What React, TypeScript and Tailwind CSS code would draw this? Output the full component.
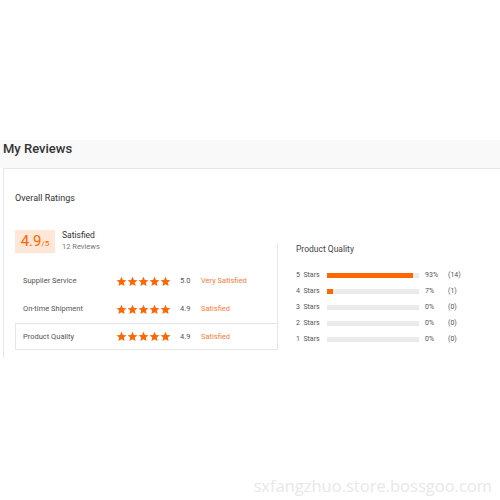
import React from 'react';

interface ScoreRow {
  label: string;
  score: string;
  status: string;
}

interface StarRow {
  label: string;
  pct: number;
  count: number;
}

const scoreRows: ScoreRow[] = [
  { label: 'Supplier Service', score: '5.0', status: 'Very Satisfied' },
  { label: 'On-time Shipment', score: '4.9', status: 'Satisfied' },
  { label: 'Product Quality', score: '4.9', status: 'Satisfied' },
];

const starRows: StarRow[] = [
  { label: '5  Stars', pct: 93, count: 14 },
  { label: '4  Stars', pct: 7, count: 1 },
  { label: '3  Stars', pct: 0, count: 0 },
  { label: '2  Stars', pct: 0, count: 0 },
  { label: '1  Stars', pct: 0, count: 0 },
];

const Star: React.FC = () => (
  <svg width="11" height="11" viewBox="0 0 24 24" className="block">
    <path
      d="M12 1.5l3.1 7 7.6.7-5.8 5.1 1.8 7.5L12 17.8l-6.7 4 1.8-7.5-5.8-5.1 7.6-.7z"
      fill="#ff6600"
    />
  </svg>
);

const App: React.FC = () => {
  return (
    <div
      className="relative h-[500px] w-[500px] overflow-hidden bg-white"
      style={{ fontFamily: 'Roboto, "Liberation Sans", sans-serif' }}
    >
      <div className="h-[140px]" />

      {/* Title band */}
      <div className="h-[28px] bg-[#f9f9f9] pl-[3px] pt-[1px]">
        <h2 className="text-[13px] font-medium leading-[16px] text-[#333]">My Reviews</h2>
      </div>

      {/* Card */}
      <div className="ml-[3px] h-[190px] border-l border-t border-[#e6e6e6] pl-[11px] pt-[23px]">
        <div className="text-[9px] leading-[12px] text-[#333]">Overall Ratings</div>

        {/* Summary */}
        <div className="mt-[26px] flex h-[23px] items-start">
          <div className="flex h-[23px] w-[40px] items-center justify-center bg-[#ffe6d6] text-[#ff6600]">
            <span className="text-[15px] leading-none">4.9</span>
            <span className="mt-[4px] text-[8px] leading-none">/5</span>
          </div>
          <div className="ml-[7px] flex flex-col">
            <span className="text-[8.5px] leading-[11px] text-[#333]">Satisfied</span>
            <span className="text-[7.5px] leading-[11px] text-[#777]">12 Reviews</span>
          </div>
        </div>

        <div className="mt-[-10px] flex">
          {/* Left: scores */}
          <div className="w-[263px] border-r border-[#e6e6e6] pt-[24px]">
            {scoreRows.map((row, i) => (
              <div
                key={row.label}
                className={
                  i === 2
                    ? 'flex h-[27px] items-center border border-r-0 border-[#e6e6e6] pl-[7px] text-[7.5px]'
                    : 'flex h-[28px] items-center pl-[8px] text-[7.5px]'
                }
              >
                <span className="w-[93px] text-[#555]">{row.label}</span>
                <div className="flex w-[55px] gap-0">
                  {[0, 1, 2, 3, 4].map((s) => (
                    <Star key={s} />
                  ))}
                </div>
                <span className="ml-[9px] w-[21px] text-[#555]">{row.score}</span>
                <span className="text-[#ff7a3a]">{row.status}</span>
              </div>
            ))}
          </div>

          {/* Right: distribution */}
          <div className="pl-[18px]">
            <div className="text-[8.5px] leading-[12px] text-[#444]">Product Quality</div>
            <div className="mt-[12px] flex flex-col">
              {starRows.map((row) => (
                <div key={row.label} className="flex h-[16px] items-center text-[7px] text-[#555]">
                  <span className="w-[31px] whitespace-pre">{row.label}</span>
                  <div className="h-[5px] w-[92px] bg-[#ebebeb]">
                    <div className="h-full bg-[#ff6600]" style={{ width: `${row.pct}%` }} />
                  </div>
                  <span className="ml-[6px] w-[23px]">{row.pct}%</span>
                  <span>({row.count})</span>
                </div>
              ))}
            </div>
          </div>
        </div>
      </div>

      {/* Watermark */}
      <div
        className="absolute right-[8px] top-[474px] text-[16.5px] text-[#e8e8e8]"
        style={{ fontFamily: '"Open Sans", sans-serif' }}
      >
        sxfangzhuo.store.bossgoo.com
      </div>
    </div>
  );
};

export default App;
